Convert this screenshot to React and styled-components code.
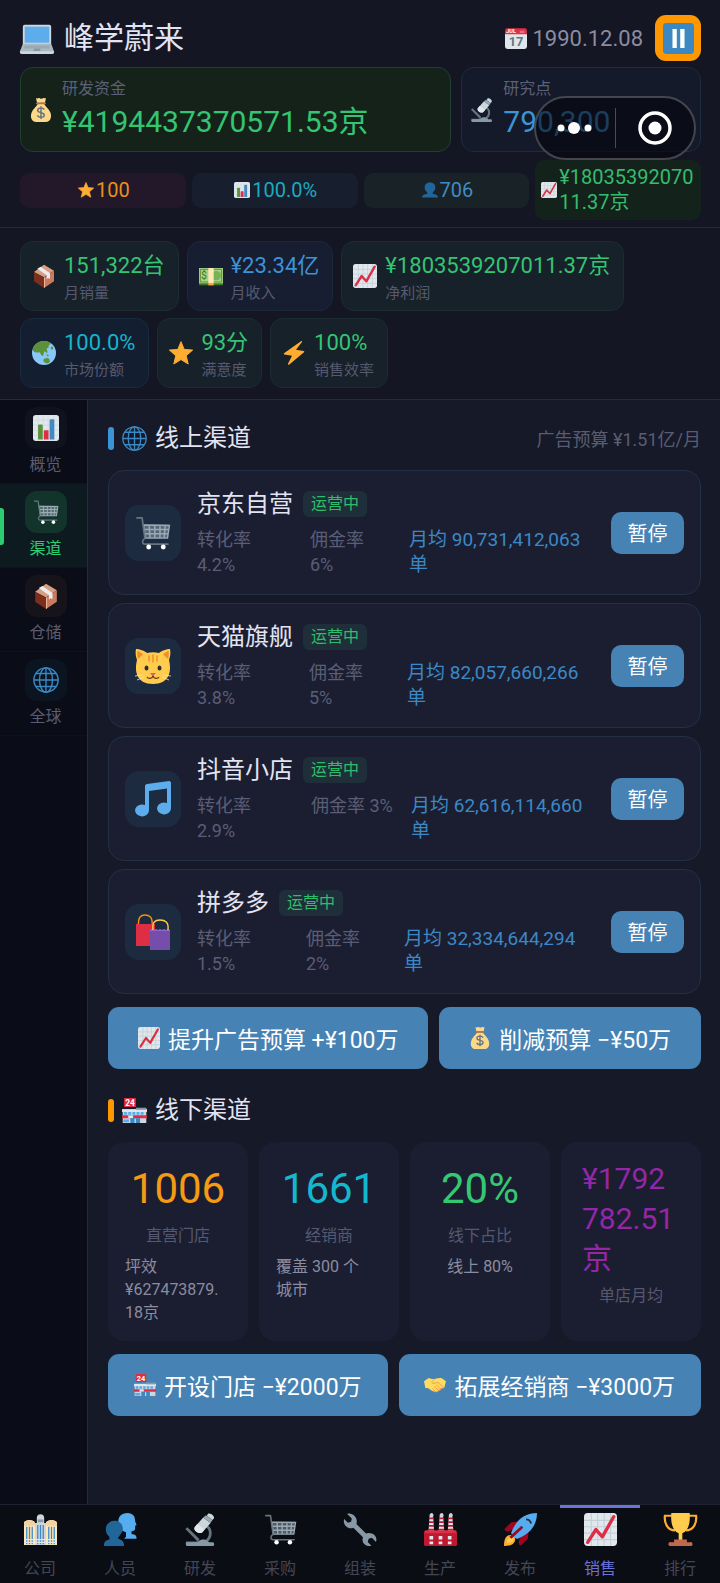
import React, { useState } from 'react'
import styled, { createGlobalStyle } from 'styled-components'

const GlobalStyle = createGlobalStyle`
  * {
    box-sizing: border-box;
  }
  body {
    margin: 0;
    background: #161927;
    color: #e2e4f3;
    font-family: Roboto, 'Noto Sans CJK SC', sans-serif;
    font-weight: 400;
  }
  button {
    font: inherit;
    border: 0;
    padding: 0;
    cursor: pointer;
  }
  a {
    color: inherit;
    text-decoration: none;
  }
  h1, h2, h3, p {
    margin: 0;
    font-size: inherit;
    font-weight: 400;
  }
`

const store = (
  <>
    <path fill="#CCD6DD" d="M1 17h34v19H1z" />
    <path fill="#E1E8ED" d="M0 16h36v4H0z" />
    <path fill="#8899A6" d="M20 14h15v3H20z" />
    <path fill="#DD2E44" d="M0 25h36v4H0zM3 0h17v13H3z" />
    <path fill="#E1E8ED" d="M9 25h7v4H9z" />
    <path fill="#55ACEE" d="M3 20h4v4H3zm6 0h4v4H9zm6 0h4v4h-4zm6 0h4v4h-4zm6 0h4v4h-4zM2 31h8v4H2z" />
    <path fill="#3B88C3" d="M12 29h14v7H12z" />
    <path fill="#CCD6DD" d="M18 30h2v6h-2z" />
    <text x="11.5" y="11" fill="#fff" fontSize="12" fontWeight="700" textAnchor="middle">24</text>
  </>
)

const glyphs = {
  laptop: (
    <>
      <path fill="#CCD6DD" d="M5 4h26a2 2 0 0 1 2 2v19H3V6a2 2 0 0 1 2-2z" />
      <path fill="#5DADEC" d="M5 6h26v17H5z" />
      <path fill="#AAB8C2" d="M3 24h30l3 8v1H0v-1z" />
      <path fill="#99AAB5" d="M5 26h26l1 3H4z" />
      <path fill="#8899A6" d="M15 29h6l1 3h-8z" />
      <path fill="#CCD6DD" d="M0 32h36v1a2 2 0 0 1-2 2H2a2 2 0 0 1-2-2z" />
    </>
  ),
  bag: (
    <>
      <path fill="#FDD888" d="M31.9 21.5C29.5 15.8 23 11 23 9H13c0 2-6.500 6.800-8.900 12.500C1.500 27.500 3 36 11 36h14c8 0 9.500-8.500 6.900-14.500z" />
      <path fill="#FDD888" d="M10.500 0c2 1.500 3 0 4.500 0s2 1.200 3.500 1.200S20.500 0 22 0s2.500 1 3.500 0L24 7H12z" />
      <path fill="#BF6952" d="M11.500 7h13a1 1 0 0 1 0 2.500h-13a1 1 0 0 1 0-2.500z" />
      <path fill="none" stroke="#67757F" strokeWidth="2.200" d="M23 17.500c-1-2-3-2.500-5-2.500-3 0-5 1.300-5 3.500 0 5 10 2 10 7 0 2.500-2.500 3.500-5 3.500s-4.500-1-5.500-3M18 12.500v19" />
    </>
  ),
  calendar: (
    <>
      <path fill="#E0E7EC" d="M0 11h36v21a4 4 0 0 1-4 4H4a4 4 0 0 1-4-4z" />
      <path fill="#DD2F45" d="M4 2h28a4 4 0 0 1 4 4v6H0V6a4 4 0 0 1 4-4z" />
      <path fill="#F5AAB5" d="M24 6h8v4h-8z" opacity=".5" />
      <text x="10" y="10.500" fill="#fff" fontSize="9" fontWeight="700" textAnchor="middle">JUL</text>
      <text x="18" y="31" fill="#66757F" fontSize="21" fontWeight="700" textAnchor="middle">17</text>
    </>
  ),
  pause: (
    <>
      <rect width="36" height="36" rx="4" fill="#3B88C3" />
      <path fill="#fff" d="M11 7h5v22h-5zM20 7h5v22h-5z" />
    </>
  ),
  microscope: (
    <>
      <path fill="#66757F" d="M2 31h14v3H2zM1.500 17.500l2.200-2 13.300 13-2.200 2.500z" />
      <path fill="none" stroke="#66757F" strokeWidth="3" d="M24 14c6 3 6.500 12 0 17" />
      <path fill="#8899A6" d="M3 36a2.500 2.500 0 0 1 0-4h10c2 0 4-3 8-3 5 0 4 3 8 3h2a2 2 0 0 1 0 4z" />
      <path fill="#CCD6DD" d="M12 15 21 5l8 6-9 10c-3 3-11-2-8-6z" />
      <path fill="#E1E8ED" d="M12 15 14.500 12l8 6-2.500 3c-3 3-11-2-8-6z" />
      <path fill="#99AAB5" d="m21 5 3-2.500 7 5L29 11z" />
      <path fill="#CCD6DD" d="M26 1c2-2 8 2 6.500 5l-1.500 1.500-6-4.500z" />
    </>
  ),
  star: <path fill="#FFAC33" stroke="#FFAC33" strokeWidth="1.500" strokeLinejoin="round" d="m18 1 4.800 11.600L35.500 13.600 25.800 22l3 12.500L18 27.800 7.200 34.500l3-12.500L.5 13.600l12.700-1z" />,
  bars: (
    <>
      <rect width="36" height="36" rx="4" fill="#E1E8ED" />
      <path stroke="#CCD6DD" strokeWidth="1" d="M0 7h36M0 14h36M0 21h36M0 28h36M7 0v36M14 0v36M21 0v36M29 0v36" />
      <path fill="#5C913B" d="M7 14.500a1.500 1.500 0 0 1 1.500-1.500H12a1.500 1.500 0 0 1 1.500 1.500V34H7z" />
      <path fill="#DD2E44" d="M15 22.500a1.500 1.500 0 0 1 1.500-1.500H20a1.500 1.500 0 0 1 1.500 1.500V34H15z" />
      <path fill="#4289C1" d="M23 7.500A1.500 1.500 0 0 1 24.500 6H28a1.500 1.500 0 0 1 1.500 1.500V34H23z" />
    </>
  ),
  trend: (
    <>
      <rect width="36" height="36" rx="4" fill="#E1E8ED" />
      <path stroke="#C3CED6" strokeWidth="1.200" d="M0 8h36M0 15h36M0 22h36M0 29h36M8 0v36M15 0v36M22 0v36M29 0v36" />
      <path fill="none" stroke="#DA2F47" strokeWidth="3.600" strokeLinecap="round" strokeLinejoin="round" d="M4 32 13 18l7 8L32.500 4" />
    </>
  ),
  bust: <path fill="#226699" d="M24 26.500c-.2-2 1-3.500 2-5 3-1.500 4-5.500 4-9C30 4.500 25 1 18 1S6 4.500 6 12.500c0 3.500 1 7.500 4 9 1 1.500 2.200 3 2 5-6 1.300-12 2.500-12 8.500h36c0-6-6-7.200-12-8.500z" />,
  busts: (
    <>
      <path fill="#55ACEE" d="M24 26v-5c-4-1-8.500-5-8.500-11C15.500 4 19 0 25.500 0S34 4 34 9l1.500 4-1.500 1v3c0 2-1.500 3-4 3v3c4 .5 5.500 1.500 5.500 5H22z" />
      <path fill="#226699" d="M15.500 28c0-2 1-2 2-4 2-2.500 3-4 3-7 0-5-4-8.500-9-8.500S2 12 2 17.500c0 2 .3 5 2.500 7C6 25.500 6 27 6 29c-4 .8-6 2-6 7h22c0-5-2.500-7-6.500-8z" />
    </>
  ),
  box: (
    <>
      <path fill="#D99E82" d="M18 1 33 10 18 20 3 12z" />
      <path fill="#7C2F1C" d="m3 12 15 8.500V36L3 26z" />
      <path fill="#C97B60" d="M33 10v16L18 36V20.500z" />
      <path fill="#E8ECEF" d="m8 7 5-3 14 10v8l-3-1-2 2v-6z" />
      <path fill="#F2B39B" d="m18 20.500 1.500-1V35L18 36z" />
    </>
  ),
  cash: (
    <>
      <path fill="#3E721D" d="M0 9h36v23H0z" />
      <path fill="#A6D388" d="M0 6h36v23H0z" />
      <path fill="none" stroke="#5C913B" strokeWidth="1.500" d="M2 8h32v19H2z" />
      <circle cx="26" cy="17.500" r="7" fill="#77B255" />
      <path fill="#FFE8B6" d="M14 6h8v23h-8z" />
      <path fill="#FFAC33" d="M14 29h8v3h-8z" />
      <text x="7.500" y="23" fill="#3E721D" fontSize="15" textAnchor="middle">$</text>
    </>
  ),
  earth: (
    <>
      <circle cx="18" cy="18" r="18" fill="#88C9F9" />
      <path fill="#5C913B" d="M1 12C4 4 10 0 18 0c4 0 8 1 10 4-1 2-3 1-3 3 1 2-1 4-3 4 0 3 2 5 1 7-2 0-3-3-5-2 0 3-1 7-3 6-2-1-2-4-4-5-3 1-7 0-9-2-1-1-1-2-1-3zM29 8l3 1-1 4-3-1zM17 28c1-3 5-1 6-3l3 2c1 2 1 5-1 6-4 1-8 0-8-5zM21 19l5 3-3 1z" />
    </>
  ),
  bolt: <path fill="#FFAC33" d="M29 0 3 18.500a1 1 0 0 0 .5 1.700L15 22 9 34c-.4 1.300.8 2.200 2 1.300L33 17c.8-.8.4-1.800-.6-2L21 13 30 1.500C30.500.5 30-.5 29 0z" />,
  web: (
    <g fill="none" stroke="#3B88C3" strokeWidth="1.900">
      <circle cx="18" cy="18" r="16.800" />
      <ellipse cx="18" cy="18" rx="9" ry="16.800" />
      <path d="M1 18h34M4 9h28M4 27h28M18 1v34" />
    </g>
  ),
  cart: (
    <g transform="translate(1 1) scale(.94)">
      <path fill="#8899A6" opacity=".55" d="M8 9h27l-2 14H10z" />
      <path fill="none" stroke="#99AAB5" strokeWidth="1.600" d="m8 9.500 27.500.5-2 13.500H10zM8.500 14.300H35M9.500 19H34M14 9.500l1 14M20 9.500v14M25.500 9.500v14M31 9.500l-1 14" />
      <path fill="none" stroke="#66757F" strokeWidth="1.800" strokeLinecap="round" strokeLinejoin="round" d="M1 2h5.500l3 22c-3 1-3.500 6 0 6H34" />
      <circle cx="13.500" cy="33" r="2.600" fill="#fff" />
      <circle cx="29" cy="33" r="2.600" fill="#fff" />
    </g>
  ),
  cat: (
    <>
      <path fill="#FFCC4D" d="M1 1c3 0 9 2 11 4 4-1 8-1 12 0 2-2 8-4 11-4 1 4 0 8-1 11 3 12 0 24-16 24S-1 24 2 12C1 9 0 5 1 1z" />
      <path fill="#F18F26" d="M2.500 3c2 .5 3.500 1.500 5.500 3.500L3 11c-1-3-1-6-.5-8zM33.500 3c-2 .5-3.500 1.500-5.500 3.500L33 11c1-3 1-6 .5-8z" />
      <path fill="none" stroke="#F18F26" strokeWidth="1.500" strokeLinecap="round" d="M18 7v7M14 8v5M22 8v5" />
      <ellipse cx="11.500" cy="20" rx="2" ry="2.500" fill="#292F33" />
      <ellipse cx="24.500" cy="20" rx="2" ry="2.500" fill="#292F33" />
      <path fill="#E75A70" d="M15 25h6l-3 3.500z" />
      <path fill="none" stroke="#66401C" strokeWidth="1.200" d="M18 28c-1 3-5 3-6 1M18 28c1 3 5 3 6 1" />
      <path stroke="#FEE7B8" strokeWidth=".8" d="m0 28 8-1M36 28l-8-1M2 32l7-3M34 32l-7-3" />
    </>
  ),
  notes: <path fill="#5DADEC" d="M34.200 0 12 3c-1 .2-2 1-2 2v19a7 6 0 1 0 4 5.500V10l18-2.500V22a7 6 0 1 0 4 5.500V2c0-1-.8-2-1.800-2z" />,
  shopping: (
    <>
      <path fill="none" stroke="#F4900C" strokeWidth="1.400" d="M3.500 11C3 3 6 1 10 1s8 2 7 10" />
      <path fill="#DD2E44" d="M1 10h19v22H1z" />
      <path fill="#744EAA" d="M15 16h20v20H15z" />
      <path fill="#9266CC" d="m15 16 2-1 2 1 2-1 2 1 2-1 2 1 2-1 2 1 2-1 2 1v1H15z" />
      <path fill="none" stroke="#FFCC4D" strokeWidth="1.400" d="M18 16c-1-8 2-10 7-10s9 2 8 10" />
    </>
  ),
  store,
  hands: (
    <>
      <path fill="#EF9645" d="M6 15c4 12 10 15 14 15 3 0 12-6 14-11L26 10z" />
      <path fill="#FFDC5D" d="M0 12 7 7c4 0 7 2 11 1 4-1 8-2 11-1l7 5-3 11c-3 1-4-2-6 0 0 2-2 3-4 3-1 3-4 3-5 2-6 1-9-4-12-5-2 0-3 1-4-1z" />
      <path fill="none" stroke="#EF9645" strokeWidth="1.400" strokeLinecap="round" d="M18 8c-3 2-7 5-4 7s6-2 9-1l9 8M20 18l7 6M17 21l6 5M14 24l4 4" />
    </>
  ),
  company: (
    <>
      <path fill="#FFE8B6" d="M0 11c0-4 12-4 12 0v24H0zM24 11c0-4 12-4 12 0v24H24z" />
      <path fill="#F3D2A2" d="M0 12c0-6 12-6 12 0v2H0zM24 12c0-6 12-6 12 0v2H24z" />
      <path fill="#CCD6DD" d="M14 5c0-5 8-5 8 0v6h2v24H12V11h2z" />
      <path fill="#8899A6" d="M15 7h6v3h-6z" />
      <path stroke="#4289C1" strokeWidth="1.400" d="M3 15v19M6 15v19M9 15v19M15 13v21M18 13v21M21 13v21M27 15v19M30 15v19M33 15v19" />
      <path stroke="#E1E8ED" strokeWidth="1.200" d="M0 29h36M0 32h36" />
    </>
  ),
  wrench: <path fill="#8899A6" d="M28 22c-1.500-.4-3 0-4 .4L13.500 12c1-2.500.500-6-1.700-8.500C9.500 1 6 0 3.500 1l5 5-.8 3.500-3.500 1-4-4c-1 3 0 6 2 8 2.500 2.300 5.500 2.700 8 1.600L20.700 26.500c-1 2.500-.5 5.500 1.700 7.600 2 2 5 2.500 7.500 1.500l-4-4 1-3.500 3.500-1 4.500 4.500c1-3 .3-5.500-1.500-7.400-1.500-1.500-3.400-2.200-5.400-2.200z" />,
  factory: (
    <>
      <path fill="#E1E8ED" d="M6 5h4l1 15H5zM17 5h4l1 15h-6zM27 5h4l1 15h-6z" />
      <path stroke="#BE1931" strokeWidth="1.900" d="M5.500 6h5M5.500 10h5M5 14h6M5 18h6M16.500 6h5M16.500 10h5M16 14h6M16 18h6M26.500 6h5M26.500 10h5M26 14h6M26 18h6" />
      <path fill="#CCD6DD" d="M6 3c0-3 3-4 4-2s0 3-1 4H6zM17 3c0-3 3-4 4-2s0 3-1 4h-3zM27 3c0-3 3-4 4-2s0 3-1 4h-3z" />
      <rect y="19" width="36" height="17" rx="2" fill="#BE1931" />
      <path fill="#DD2E44" d="M1 19h34v3H1z" />
      <path fill="#E1E8ED" d="M6 25h4v4H6zm10 0h4v4h-4zm10 0h4v4h-4zM6 31h4v3H6zm10 0h4v3h-4zm10 0h4v3h-4z" />
    </>
  ),
  rocket: (
    <>
      <path fill="#A0041E" d="M1 17 8 10l10-1-3 7-10 4c-3 0-5-1-4-3zM19 35l7-7 1-10-7 3-4 10c0 3 1 5 3 4z" />
      <path fill="#FFAC33" d="M0 36c0-7 2-12 7-12 4 0 6 3 5 6-1 5-7 6-12 6z" />
      <path fill="#FFCC4D" d="M3 33c0-4 2-6 5-6 2 0 3 2 2 3-1 2-4 3-7 3z" />
      <path fill="#55ACEE" d="M36 0C24 0 14 6 8 21c-1 2 4 8 7 7C30 22 36 12 36 0z" />
      <path fill="none" stroke="#A0041E" strokeWidth="3" d="m7 27 13-12" />
      <path fill="none" stroke="#292F33" strokeWidth="2" d="M24 7c3 0 5 2 5.500 4.500" />
    </>
  ),
  trophy: (
    <>
      <path fill="none" stroke="#FFAC33" strokeWidth="2.400" d="M9 3H1c-1 8 3 16 11 16M27 3h8c1 8-3 16-11 16" />
      <path fill="#FFCC4D" d="M8 0h20c1 12-2 20-8 22v8h-4v-8C10 20 7 12 8 0z" />
      <path fill="#C1694F" d="M11 29h14v3h3a2 2 0 0 1 2 4H6a2 2 0 0 1 2-4h3z" />
    </>
  ),
}

const Svg = styled.svg`
  display: block;
  flex: none;
  overflow: visible;
`

const Icon = ({ name, size = 24 }) => (
  <Svg width={size} height={size} viewBox="0 0 36 36" aria-hidden="true">
    {glyphs[name]}
  </Svg>
)

const chips = [
  { icon: 'star', value: '100', color: '#e8901a', bg: '#23182a' },
  { icon: 'bars', value: '100.0%', color: '#1fa9bd', bg: '#171e2e' },
  { icon: 'bust', value: '706', color: '#3f8cc7', bg: '#192226' },
  { icon: 'trend', value: '¥1803539207011.37京', color: '#34bd6d', bg: '#14221c' },
]

const stats = [
  { icon: 'box', value: '151,322台', label: '月销量', tone: 'green' },
  { icon: 'cash', value: '¥23.34亿', label: '月收入', tone: 'blue' },
  { icon: 'trend', value: '¥1803539207011.37京', label: '净利润', tone: 'green' },
  { icon: 'earth', value: '100.0%', label: '市场份额', tone: 'cyan' },
  { icon: 'star', value: '93分', label: '满意度', tone: 'green' },
  { icon: 'bolt', value: '100%', label: '销售效率', tone: 'green' },
]

const tones = {
  green: { color: '#34c573', bg: '#17212a', line: '#1b2c33' },
  blue: { color: '#3c93d6', bg: '#171e31', line: '#1b283c' },
  cyan: { color: '#14b4cb', bg: '#141e31', line: '#172b40' },
}

const sideItems = [
  { icon: 'bars', label: '概览', bg: '#10131d' },
  { icon: 'cart', label: '渠道', bg: '#13342b' },
  { icon: 'box', label: '仓储', bg: '#17131a' },
  { icon: 'web', label: '全球', bg: '#0a1521' },
]

const channels = [
  { icon: 'cart', name: '京东自营', rate: '4.2%', fee: '6%', orders: '90,731,412,063', cols: '101px 87px' },
  { icon: 'cat', name: '天猫旗舰', rate: '3.8%', fee: '5%', orders: '82,057,660,266', cols: '100px 86px' },
  { icon: 'notes', name: '抖音小店', rate: '2.9%', fee: '3%', orders: '62,616,114,660', cols: '102px 88px', feeInline: true },
  { icon: 'shopping', name: '拼多多', rate: '1.5%', fee: '2%', orders: '32,334,644,294', cols: '97px 86px' },
]

const stores = [
  { value: '1006', label: '直营门店', note: '坪效\n¥627473879.\n18京', color: '#f59a14', wide: true },
  { value: '1661', label: '经销商', note: '覆盖 300 个\n城市', color: '#13b8cf', wide: true },
  { value: '20%', label: '线下占比', note: '线上 80%', color: '#35c873' },
  { value: '¥1792\n782.51\n京', label: '单店月均', color: '#9327a6', long: true },
]

const tabs = [
  { icon: 'company', label: '公司' },
  { icon: 'busts', label: '人员' },
  { icon: 'microscope', label: '研发' },
  { icon: 'cart', label: '采购' },
  { icon: 'wrench', label: '组装' },
  { icon: 'factory', label: '生产' },
  { icon: 'rocket', label: '发布' },
  { icon: 'trend', label: '销售' },
  { icon: 'trophy', label: '排行' },
]

const App = () => {
  const [section, setSection] = useState('渠道')
  const [tab, setTab] = useState('销售')

  return (
    <Page>
      <GlobalStyle />
      <Header>
        <TitleRow>
          <Icon name="laptop" size={34} />
          <Title>峰学蔚来</Title>
          <DateText>
            <Icon name="calendar" size={22} />
            1990.12.08
          </DateText>
          <PauseButton aria-label="暂停游戏">
            <Icon name="pause" size={31} />
          </PauseButton>
        </TitleRow>
        <Funds>
          <Fund $bg="#142219" $line="#20402f">
            <Icon name="bag" size={24} />
            <div>
              <FundLabel>研发资金</FundLabel>
              <FundValue $color="#34c573">¥4194437370571.53京</FundValue>
            </div>
          </Fund>
          <Fund $bg="#141a29" $line="#1d2c3f">
            <Icon name="microscope" size={24} />
            <div>
              <FundLabel>研究点</FundLabel>
              <FundValue $color="#3c93d6">790,300</FundValue>
            </div>
          </Fund>
        </Funds>
        <Chips>
          {chips.map((chip) => (
            <Chip key={chip.icon} $bg={chip.bg} $color={chip.color}>
              <Icon name={chip.icon} size={16} />
              <span>{chip.value}</span>
            </Chip>
          ))}
        </Chips>
        <Capsule>
          <CapsuleButton aria-label="更多">
            <Svg width="36" height="14" viewBox="0 0 36 14">
              <g fill="#fff">
                <circle cx="4" cy="7" r="3.500" />
                <circle cx="17" cy="7" r="6" />
                <circle cx="31" cy="7" r="3.500" />
              </g>
            </Svg>
          </CapsuleButton>
          <CapsuleButton aria-label="关闭">
            <Svg width="34" height="34" viewBox="0 0 34 34">
              <circle cx="17" cy="17" r="15" fill="none" stroke="#fff" strokeWidth="3.500" />
              <circle cx="17" cy="17" r="6.500" fill="#fff" />
            </Svg>
          </CapsuleButton>
        </Capsule>
      </Header>

      <Stats>
        {stats.map((stat) => (
          <Stat key={stat.label} $tone={tones[stat.tone]}>
            <Icon name={stat.icon} size={24} />
            <div>
              <StatValue $color={tones[stat.tone].color}>{stat.value}</StatValue>
              <StatLabel>{stat.label}</StatLabel>
            </div>
          </Stat>
        ))}
      </Stats>

      <Body>
        <Sidebar>
          {sideItems.map((item) => (
            <SideItem
              key={item.label}
              $active={section === item.label}
              onClick={() => setSection(item.label)}
            >
              <SideIcon $bg={item.bg}>
                <Icon name={item.icon} size={26} />
              </SideIcon>
              {item.label}
            </SideItem>
          ))}
        </Sidebar>

        <Main>
          <SectionHead $color="#3c93d6">
            <Icon name="web" size={25} />
            <SectionTitle>线上渠道</SectionTitle>
            <Budget>广告预算 ¥1.51亿/月</Budget>
          </SectionHead>
          <ChannelList>
            {channels.map((channel) => (
              <Channel key={channel.name}>
                <ChannelIcon>
                  <Icon name={channel.icon} size={36} />
                </ChannelIcon>
                <ChannelInfo>
                  <NameRow>
                    <h3>{channel.name}</h3>
                    <Badge>运营中</Badge>
                  </NameRow>
                  <Meta $cols={channel.cols}>
                    <span>
                      转化率
                      <br />
                      {channel.rate}
                    </span>
                    <span>
                      佣金率 {!channel.feeInline && <br />}
                      {channel.fee}
                    </span>
                    <Orders>
                      月均 {channel.orders}
                      <br />单
                    </Orders>
                  </Meta>
                </ChannelInfo>
                <StopButton>暂停</StopButton>
              </Channel>
            ))}
          </ChannelList>
          <Actions>
            <Action>
              <Icon name="trend" size={22} />
              提升广告预算 +¥100万
            </Action>
            <Action>
              <Icon name="bag" size={22} />
              削减预算 −¥50万
            </Action>
          </Actions>

          <SectionHead $color="#ff9800">
            <Icon name="store" size={25} />
            <SectionTitle>线下渠道</SectionTitle>
          </SectionHead>
          <Stores>
            {stores.map((item) => (
              <Store key={item.label}>
                <StoreValue $color={item.color} $long={item.long}>
                  {item.value}
                </StoreValue>
                <StoreLabel>{item.label}</StoreLabel>
                {item.note && <StoreNote $wide={item.wide}>{item.note}</StoreNote>}
              </Store>
            ))}
          </Stores>
          <Actions>
            <Action>
              <Icon name="store" size={22} />
              开设门店 −¥2000万
            </Action>
            <Action>
              <Icon name="hands" size={22} />
              拓展经销商 −¥3000万
            </Action>
          </Actions>
        </Main>
      </Body>

      <TabBar>
        {tabs.map((item) => (
          <Tab
            key={item.label}
            href={`#${item.icon}`}
            $active={tab === item.label}
            onClick={() => setTab(item.label)}
          >
            <Icon name={item.icon} size={33} />
            {item.label}
          </Tab>
        ))}
      </TabBar>
    </Page>
  )
}

const Page = styled.div`
  min-height: 100vh;
  display: flex;
  flex-direction: column;
`

const Header = styled.header`
  position: relative;
  padding: 15px 19px 7px 20px;
  background: #141624;
  border-bottom: 1px solid #262a3d;
`

const TitleRow = styled.div`
  display: flex;
  align-items: center;
  gap: 10px;
  height: 46px;
`

const Title = styled.h1`
  font-size: 30px;
  line-height: 40px;
`

const DateText = styled.span`
  display: flex;
  align-items: center;
  gap: 5px;
  margin: 0 2px 0 auto;
  font-size: 22px;
  color: #8b8ca0;
`

const PauseButton = styled.button`
  display: grid;
  place-items: center;
  width: 46px;
  height: 46px;
  border-radius: 11px;
  background: #ff9800;
`

const Funds = styled.div`
  display: grid;
  grid-template-columns: 9fr 5fr;
  gap: 10px;
  margin-top: 6px;
`

const Fund = styled.div`
  display: flex;
  align-items: center;
  gap: 9px;
  min-width: 0;
  padding: 9px 8px 8px;
  border: 1px solid ${(p) => p.$line};
  border-radius: 13px;
  background: ${(p) => p.$bg};
`

const FundLabel = styled.p`
  font-size: 16px;
  line-height: 24px;
  color: #5c6078;
`

const FundValue = styled.p`
  font-size: 30px;
  line-height: 42px;
  color: ${(p) => p.$color};
`

const Chips = styled.div`
  display: grid;
  grid-template-columns: repeat(4, minmax(0, 1fr));
  align-items: center;
  gap: 6px;
  margin-top: 8px;
`

const Chip = styled.div`
  display: flex;
  align-items: center;
  justify-content: center;
  gap: 2px;
  padding: 5px 4px 5px 6px;
  border-radius: 9px;
  background: ${(p) => p.$bg};
  color: ${(p) => p.$color};
  font-size: 20px;
  line-height: 25px;
  word-break: break-all;
`

const Capsule = styled.div`
  position: absolute;
  top: 96px;
  right: 24px;
  display: flex;
  align-items: center;
  width: 162px;
  height: 64px;
  border: 2px solid #45464d;
  border-radius: 32px;
  background: rgba(3, 5, 12, 0.6);
`

const CapsuleButton = styled.button`
  flex: 1;
  display: grid;
  place-items: center;
  height: 40px;
  background: none;

  & + & {
    border-left: 1px solid #4a4c55;
  }
`

const Stats = styled.section`
  display: flex;
  flex-wrap: wrap;
  gap: 7px 8px;
  padding: 13px 19px 11px 20px;
  background: #141624;
  border-bottom: 1px solid #262a3d;
`

const Stat = styled.div`
  display: flex;
  align-items: center;
  gap: 8px;
  height: 70px;
  padding: 0 13px 0 11px;
  border: 1px solid ${(p) => p.$tone.line};
  border-radius: 13px;
  background: ${(p) => p.$tone.bg};
`

const StatValue = styled.p`
  font-size: 22px;
  line-height: 34px;
  color: ${(p) => p.$color};
`

const StatLabel = styled.p`
  font-size: 15px;
  line-height: 20px;
  color: #56596f;
`

const Body = styled.div`
  flex: 1;
  display: flex;
`

const Sidebar = styled.nav`
  flex: none;
  width: 88px;
  background: #0a0c17;
  border-right: 1px solid #262a3d;
`

const SideItem = styled.button`
  position: relative;
  display: flex;
  flex-direction: column;
  align-items: center;
  gap: 5px;
  width: 100%;
  height: 84px;
  padding: 7px 0 0 4px;
  border-bottom: 1px solid #0f121d;
  font-size: 16px;
  line-height: 22px;
  background: ${(p) => (p.$active ? '#0d1a20' : 'none')};
  color: ${(p) => (p.$active ? '#2ecc71' : '#5a5d72')};

  &::before {
    content: '';
    display: ${(p) => (p.$active ? 'block' : 'none')};
    position: absolute;
    left: 0;
    top: 24px;
    width: 4px;
    height: 37px;
    border-radius: 0 3px 3px 0;
    background: #2ecc71;
  }
`

const SideIcon = styled.span`
  display: grid;
  place-items: center;
  width: 42px;
  height: 42px;
  border-radius: 12px;
  background: ${(p) => p.$bg};
`

const Main = styled.main`
  flex: 1;
  min-width: 0;
  padding: 13px 19px 20px 20px;
`

const SectionHead = styled.div`
  display: flex;
  align-items: center;
  gap: 8px;
  height: 50px;
  margin-bottom: 7px;

  &::before {
    content: '';
    width: 6px;
    height: 23px;
    border-radius: 3px;
    background: ${(p) => p.$color};
  }
`

const SectionTitle = styled.h2`
  font-size: 24px;
  line-height: 32px;
`

const Budget = styled.span`
  margin-left: auto;
  font-size: 18px;
  color: #5a5d72;
`

const ChannelList = styled.div`
  display: grid;
  gap: 8px;
`

const Channel = styled.article`
  display: flex;
  align-items: center;
  gap: 16px;
  padding: 17px 16px;
  border: 1px solid #223044;
  border-radius: 16px;
  background: #1b1e31;
`

const ChannelIcon = styled.div`
  flex: none;
  display: grid;
  place-items: center;
  width: 56px;
  height: 56px;
  border-radius: 14px;
  background: #1d2b41;
`

const ChannelInfo = styled.div`
  flex: 1;
  min-width: 0;
`

const NameRow = styled.div`
  display: flex;
  align-items: center;
  gap: 10px;
  margin-bottom: 7px;
  font-size: 24px;
  line-height: 32px;
`

const Badge = styled.span`
  padding: 0 8px;
  border-radius: 6px;
  background: #1e2f39;
  color: #2ebd6b;
  font-size: 16px;
  line-height: 26px;
`

const Meta = styled.div`
  display: grid;
  grid-template-columns: ${(p) => p.$cols} 1fr;
  column-gap: 12px;
  font-size: 18px;
  line-height: 25px;
  color: #5a5d76;
  white-space: nowrap;
`

const Orders = styled.span`
  font-size: 19px;
  color: #3b88c6;
`

const StopButton = styled.button`
  flex: none;
  width: 73px;
  height: 42px;
  border-radius: 10px;
  background: #4682b4;
  color: #fff;
  font-size: 20px;
`

const Actions = styled.div`
  display: flex;
  gap: 11px;
  margin: 13px 0 16px;
`

const Action = styled.button`
  flex: 1 1 auto;
  display: flex;
  align-items: center;
  justify-content: center;
  gap: 8px;
  height: 62px;
  border-radius: 11px;
  background: #4682b4;
  color: #fff;
  font-size: 23px;
`

const Stores = styled.div`
  display: grid;
  grid-template-columns: repeat(4, minmax(0, 1fr));
  gap: 11px;
`

const Store = styled.div`
  display: flex;
  flex-direction: column;
  align-items: center;
  padding: 17px;
  border-radius: 16px;
  background: #1b1e31;
`

const StoreValue = styled.p`
  min-width: ${(p) => (p.$long ? '98px' : '0')};
  font-size: ${(p) => (p.$long ? '30px' : '42px')};
  line-height: ${(p) => (p.$long ? '40px' : '60px')};
  color: ${(p) => p.$color};
  white-space: pre-line;
`

const StoreLabel = styled.p`
  margin-top: 4px;
  font-size: 16px;
  line-height: 26px;
  color: #555870;
`

const StoreNote = styled.p`
  align-self: ${(p) => (p.$wide ? 'stretch' : 'center')};
  margin-top: 6px;
  font-size: 16px;
  line-height: 23px;
  color: #8b8ca0;
  white-space: pre;
`

const TabBar = styled.nav`
  display: grid;
  grid-template-columns: repeat(9, 1fr);
  background: #0b0d14;
  border-top: 1px solid #1f2230;
`

const Tab = styled.a`
  display: flex;
  flex-direction: column;
  align-items: center;
  gap: 13px;
  height: 78px;
  padding-top: 5px;
  border-top: 3px solid ${(p) => (p.$active ? '#6a72dc' : 'transparent')};
  font-size: 16px;
  line-height: 20px;
  color: ${(p) => (p.$active ? '#6a72dc' : '#444656')};
`

export default App
